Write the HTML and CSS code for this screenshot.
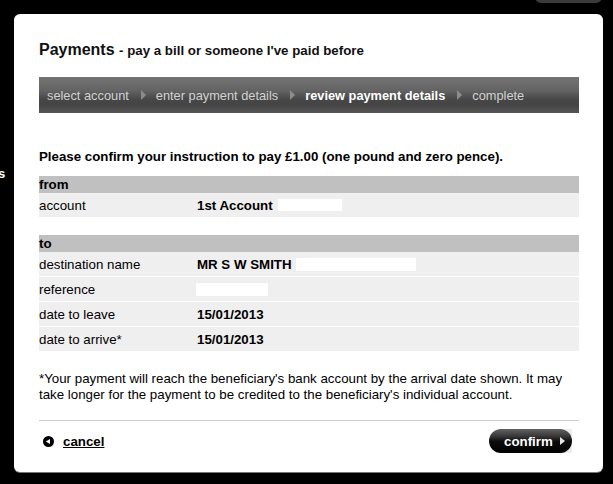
FILE: index.html
```html
<!DOCTYPE html>
<html lang="en">
<head>
<meta charset="utf-8">
<title>Payments</title>
<link rel="stylesheet" href="styles.css">
</head>
<body>
<span class="bg-text">s</span>
<div class="bg-tab"></div>
<div class="dialog">
  <h1 class="title">Payments <span class="subtitle">- pay a bill or someone I've paid before</span></h1>
  <ol class="steps">
    <li class="step">select account</li>
    <li class="sep"><svg width="5" height="10" viewBox="0 0 5 10"><path d="M0 0L5 5L0 10Z" fill="#8c8c8c"/></svg></li>
    <li class="step">enter payment details</li>
    <li class="sep"><svg width="5" height="10" viewBox="0 0 5 10"><path d="M0 0L5 5L0 10Z" fill="#8c8c8c"/></svg></li>
    <li class="step current">review payment details</li>
    <li class="sep"><svg width="5" height="10" viewBox="0 0 5 10"><path d="M0 0L5 5L0 10Z" fill="#8c8c8c"/></svg></li>
    <li class="step">complete</li>
  </ol>

  <p class="intro">Please confirm your instruction to pay £1.00 (one pound and zero pence).</p>

  <div class="group">
    <div class="group-head">from</div>
    <div class="row"><span class="label">account</span><span class="value">1st Account</span><span class="mask mask-account"></span></div>
  </div>

  <div class="group">
    <div class="group-head">to</div>
    <div class="row"><span class="label">destination name</span><span class="value">MR S W SMITH</span><span class="mask mask-name"></span></div>
    <div class="row"><span class="label">reference</span><span class="mask mask-ref"></span></div>
    <div class="row"><span class="label">date to leave</span><span class="value">15/01/2013</span></div>
    <div class="row"><span class="label">date to arrive*</span><span class="value">15/01/2013</span></div>
  </div>

  <p class="note">*Your payment will reach the beneficiary's bank account by the arrival date shown. It may take longer for the payment to be credited to the beneficiary's individual account.</p>

  <div class="footer">
    <a class="cancel" href="#"><svg class="cancel-icon" width="11" height="11" viewBox="0 0 11 11"><circle cx="5.5" cy="5.5" r="5.5" fill="#000"/><path d="M2.8 5.5L7 2.9L7 8.1Z" fill="#fff"/></svg><span class="cancel-text">cancel</span></a>
    <span class="confirm-wrap"><button class="confirm" type="button">confirm<svg class="confirm-arrow" width="5" height="8" viewBox="0 0 5 8"><path d="M0 0L5 4L0 8Z" fill="#e6e6e6"/></svg></button></span>
  </div>
</div>
</body>
</html>
```

FILE: styles.css
```css
* {
  box-sizing: border-box;
}

html, body {
  margin: 0;
}

body {
  position: relative;
  width: 613px;
  height: 484px;
  overflow: hidden;
  padding: 14px 0 0 14px;
  background: #000;
  font-family: "Liberation Sans", Arial, Helvetica, sans-serif;
  color: #000;
}

.bg-text {
  position: absolute;
  left: -2px;
  top: 166px;
  color: #fff;
  font-size: 13px;
  font-weight: bold;
}

.bg-tab {
  position: absolute;
  left: 535px;
  top: -6px;
  width: 67px;
  height: 9px;
  background: #3a3a3a;
  border-radius: 0 0 6px 6px;
}

.dialog {
  width: 589px;
  height: 458px;
  background: #fff;
  border-radius: 6px;
  padding: 26px 24px 0 25px;
  box-shadow: 0 1px 0 #777;
}

.title {
  margin: 0;
  font-size: 16px;
  line-height: 20px;
  font-weight: bold;
  color: #111;
}

.subtitle {
  font-size: 13.3px;
}

.steps {
  list-style: none;
  margin: 16px 0 0;
  padding: 0 0 0 8px;
  height: 36px;
  display: flex;
  align-items: center;
  background: linear-gradient(to bottom, #747474 0%, #636363 38%, #474747 62%, #444 78%, #575757 100%);
  font-size: 12.8px;
  color: #d2d2d2;
}

.step.current {
  color: #fff;
  font-weight: bold;
}

.sep {
  display: flex;
  margin: 0 10px 0 12px;
}

.intro {
  margin: 36px 0 0;
  font-size: 13.3px;
  line-height: 16px;
  font-weight: bold;
}

.group {
  margin-top: 11px;
}

.group + .group {
  margin-top: 18px;
}

.group-head {
  height: 17px;
  line-height: 17px;
  background: #c0c0c0;
  font-size: 13.3px;
  font-weight: bold;
}

.row {
  display: flex;
  align-items: center;
  height: 24px;
  background: #efefef;
  font-size: 13.3px;
}

.row + .row {
  height: 25px;
  border-top: 1px solid #fff;
}

.label {
  width: 158px;
  flex: none;
}

.value {
  font-weight: bold;
}

.mask {
  display: inline-block;
  background: #fff;
}

.mask-account {
  width: 64px;
  height: 12px;
  margin-left: 5px;
}

.mask-name {
  width: 120px;
  height: 13px;
  margin-left: 4px;
}

.mask-ref {
  width: 72px;
  height: 13px;
  margin-left: -1px;
}

.note {
  margin: 20px 0 0;
  font-size: 13.3px;
  line-height: 16px;
}

.footer {
  margin-top: 17px;
  border-top: 1px solid #cdcdcd;
  padding-top: 8px;
  display: flex;
  justify-content: space-between;
  align-items: center;
}

.cancel {
  display: flex;
  align-items: center;
  padding-left: 4px;
  color: #000;
  font-size: 13.3px;
  font-weight: bold;
  text-decoration: none;
}

.cancel-icon {
  display: block;
  margin-right: 9px;
}

.cancel-text {
  text-decoration: underline;
}

.confirm-wrap {
  display: flex;
  margin-right: 7px;
  background: linear-gradient(to right, transparent 80%, #ededed 80%);
}

.confirm {
  display: flex;
  align-items: center;
  height: 24px;
  width: 83px;
  padding: 0 0 0 15px;
  border: 0;
  border-radius: 12px;
  background: linear-gradient(to bottom, #626262 0%, #383838 30%, #0c0c0c 52%, #000 100%);
  color: #fff;
  font-family: "Liberation Sans", Arial, Helvetica, sans-serif;
  font-size: 13.3px;
  font-weight: bold;
  cursor: pointer;
}

.confirm-arrow {
  display: block;
  margin-left: 7px;
}
```
